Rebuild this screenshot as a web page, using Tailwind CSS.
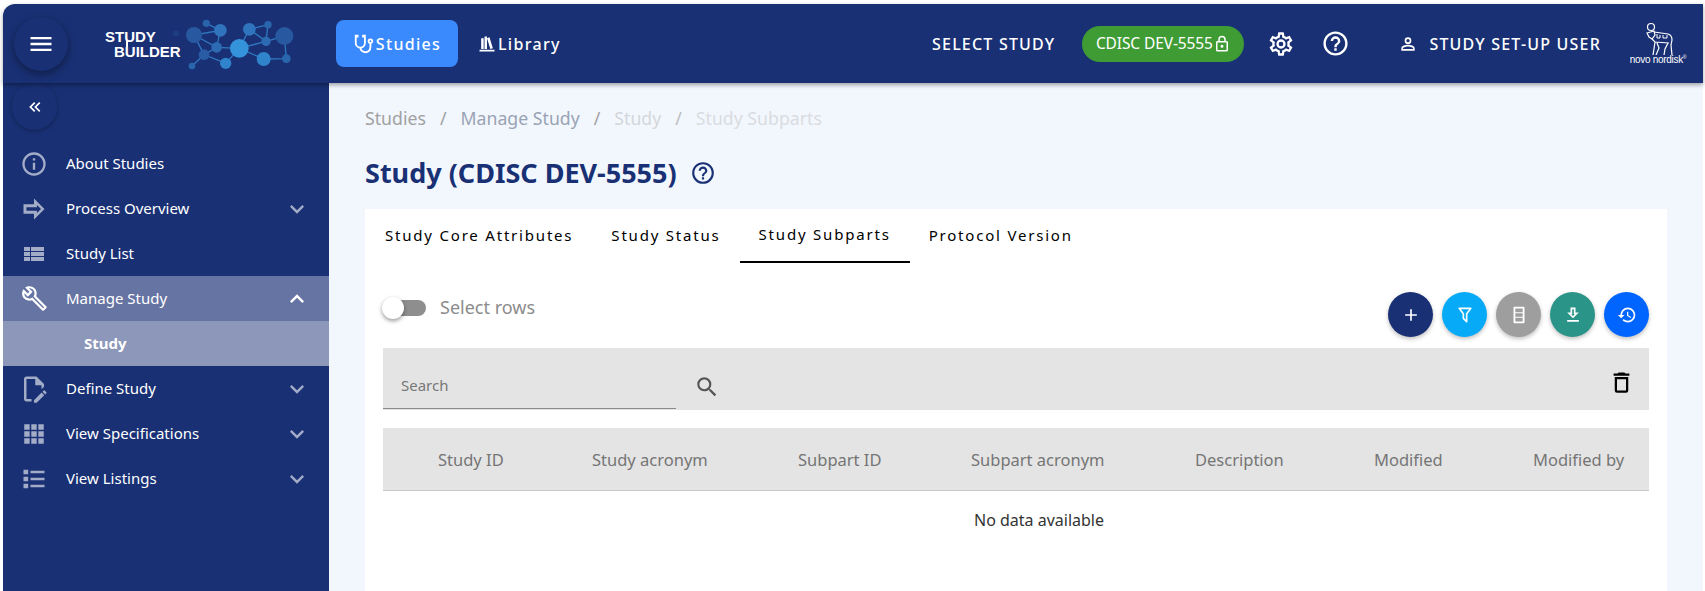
<!DOCTYPE html>
<html lang="en">
<head>
  <meta charset="UTF-8">
  <title>Study Subparts</title>
  <script src="https://cdn.jsdelivr.net/npm/@tailwindcss/browser@4"></script>
</head>
<body class="bg-white font-['Noto_Sans',sans-serif] overflow-hidden">
  <div class="h-[591px] pt-[4px] pl-[3px] pr-[2px] flex flex-col overflow-hidden">

    <!-- Top bar -->
    <header class="relative z-10 h-[79px] shrink-0 flex items-center bg-[#193074] rounded-tl-xl text-white shadow-[0_2px_4px_rgba(0,0,0,0.35)]">
      <button class="ml-[11px] w-[54px] h-[54px] rounded-full bg-[#193074] shadow-[0_3px_8px_rgba(0,0,0,0.4)] flex items-center justify-center">
        <svg class="w-7 h-7 fill-white" viewBox="0 0 24 24"><path d="M3,6H21V8H3V6M3,11H21V13H3V11M3,16H21V18H3V16Z"/></svg>
      </button>

      <!-- Logo -->
      <div class="relative ml-[22px] w-[220px] h-[75px] shrink-0">
        <svg class="absolute inset-0 w-[220px] h-[75px]" viewBox="0 0 660 225">
          <g stroke="#2f78c0" stroke-width="4" fill="none">
            <path d="M312 87L391 73L349 52M312 87L380 124L391 73M380 124L342 146L306 180M342 146L407 172L448 127L380 124M312 87L342 146M448 127L478 70L534 56L528 106L478 70M448 127L528 106L583 90L589 158L521 159L448 127"/>
          </g>
          <circle cx="258" cy="82" r="10" fill="#1c3b80"/>
          <circle cx="312" cy="87" r="24" fill="#28589f"/>
          <circle cx="391" cy="73" r="19" fill="#2f74bc"/>
          <circle cx="349" cy="52" r="11" fill="#2a63aa"/>
          <circle cx="380" cy="124" r="16" fill="#2c6ab2"/>
          <circle cx="342" cy="146" r="16" fill="#2a5ca6"/>
          <circle cx="448" cy="127" r="28" fill="#3593dc"/>
          <circle cx="407" cy="172" r="17" fill="#2f84cc"/>
          <circle cx="306" cy="180" r="10" fill="#2a66ae"/>
          <circle cx="478" cy="70" r="19" fill="#2f74bc"/>
          <circle cx="534" cy="56" r="11" fill="#2a66ae"/>
          <circle cx="528" cy="106" r="14" fill="#2c6ab2"/>
          <circle cx="583" cy="90" r="27" fill="#28589f"/>
          <circle cx="521" cy="159" r="21" fill="#2f84cc"/>
          <circle cx="589" cy="158" r="13" fill="#2a66ae"/>
        </svg>
        <div class="absolute left-[15px] top-[23px] font-['Liberation_Sans'] font-bold text-[15px] leading-[15px]">STUDY</div>
        <div class="absolute left-[24px] top-[38px] font-['Liberation_Sans'] font-bold text-[15px] leading-[15px]">BUILDER</div>
        <div class="absolute left-[36px] top-[34px] w-[2px] h-[7px] bg-white"></div>
      </div>

      <!-- Main tabs -->
      <nav class="ml-[26px] flex items-center text-[16px] font-medium tracking-[1.3px]">
        <a class="w-[122px] h-[47px] rounded-lg bg-[#3b8afd] flex items-center justify-center gap-[1px]">
          <svg class="w-[22px] h-[22px] fill-white" viewBox="0 0 24 24"><path d="M19,8C19.56,8 20,8.43 20,9A1,1 0 0,1 19,10C18.43,10 18,9.55 18,9C18,8.43 18.43,8 19,8M2,2V11C2,13.96 4.19,16.5 7.14,16.91C7.76,19.92 10.42,22 13.5,22A6.5,6.5 0 0,0 20,15.5V11.81C21.16,11.39 22,10.29 22,9A3,3 0 0,0 19,6A3,3 0 0,0 16,9C16,10.29 16.84,11.4 18,11.81V15.41C18,17.91 16,19.91 13.5,19.91C11.5,19.91 9.82,18.7 9.22,16.9C12,16.3 14,13.8 14,11V2H10V5H12V11A4,4 0 0,1 8,15A4,4 0 0,1 4,11V5H6V2H2Z"/></svg>
          Studies
        </a>
        <a class="ml-[19px] flex items-center gap-[1px]">
          <svg class="w-[20px] h-[20px] fill-white" viewBox="0 0 24 24"><path d="M9 3V18H12V3H9M12 5L16 18L19 17L15 4L12 5M5 5V18H8V5H5M3 19V21H21V19H3Z"/></svg>
          Library
        </a>
      </nav>

      <!-- Right side -->
      <div class="ml-auto flex items-center">
        <span class="text-[16px] font-medium tracking-[1.2px]">SELECT STUDY</span>
        <span class="ml-[27px] w-[162px] h-[36px] rounded-full bg-[#3f9c35] flex items-center justify-center text-[15.5px] tracking-[-0.1px]">
          CDISC DEV-5555
          <svg class="w-[18px] h-[18px] fill-white" viewBox="0 0 24 24"><path d="M12,17C10.89,17 10,16.1 10,15C10,13.89 10.89,13 12,13A2,2 0 0,1 14,15A2,2 0 0,1 12,17M18,20V10H6V20H18M18,8A2,2 0 0,1 20,10V20A2,2 0 0,1 18,22H6C4.89,22 4,21.1 4,20V10C4,8.89 4.89,8 6,8H7V6A5,5 0 0,1 12,1A5,5 0 0,1 17,6V8H18M12,3A3,3 0 0,0 9,6V8H15V6A3,3 0 0,0 12,3Z"/></svg>
        </span>
        <svg class="ml-[23px] w-[28px] h-[28px] fill-white" viewBox="0 0 24 24"><path d="M12,8A4,4 0 0,1 16,12A4,4 0 0,1 12,16A4,4 0 0,1 8,12A4,4 0 0,1 12,8M12,10A2,2 0 0,0 10,12A2,2 0 0,0 12,14A2,2 0 0,0 14,12A2,2 0 0,0 12,10M10,22C9.75,22 9.54,21.82 9.5,21.58L9.13,18.93C8.5,18.68 7.96,18.34 7.44,17.94L4.95,18.95C4.73,19.03 4.46,18.95 4.34,18.73L2.34,15.27C2.21,15.05 2.27,14.78 2.46,14.63L4.57,12.97L4.5,12L4.57,11L2.46,9.37C2.27,9.22 2.21,8.95 2.34,8.73L4.34,5.27C4.46,5.05 4.73,4.96 4.95,5.05L7.44,6.05C7.96,5.66 8.5,5.32 9.13,5.07L9.5,2.42C9.54,2.18 9.75,2 10,2H14C14.25,2 14.46,2.18 14.5,2.42L14.87,5.07C15.5,5.32 16.04,5.66 16.56,6.05L19.05,5.05C19.27,4.96 19.54,5.05 19.66,5.27L21.66,8.73C21.79,8.95 21.73,9.22 21.54,9.37L19.43,11L19.5,12L19.43,13L21.54,14.63C21.73,14.78 21.79,15.05 21.66,15.27L19.66,18.73C19.54,18.95 19.27,19.04 19.05,18.95L16.56,17.95C16.04,18.34 15.5,18.68 14.87,18.93L14.5,21.58C14.46,21.82 14.25,22 14,22H10M11.25,4L10.88,6.61C9.68,6.86 8.62,7.5 7.85,8.39L5.44,7.35L4.69,8.65L6.8,10.2C6.4,11.37 6.4,12.64 6.8,13.8L4.68,15.36L5.43,16.66L7.86,15.62C8.63,16.5 9.68,17.14 10.87,17.38L11.24,20H12.76L13.13,17.39C14.32,17.14 15.37,16.5 16.14,15.62L18.57,16.66L19.32,15.36L17.2,13.81C17.6,12.64 17.6,11.37 17.2,10.2L19.31,8.65L18.56,7.35L16.15,8.39C15.38,7.5 14.32,6.86 13.12,6.62L12.75,4H11.25Z"/></svg>
        <svg class="ml-[26px] w-[29px] h-[29px] fill-white" viewBox="0 0 24 24"><path d="M11,18H13V16H11V18M12,2A10,10 0 0,0 2,12A10,10 0 0,0 12,22A10,10 0 0,0 22,12A10,10 0 0,0 12,2M12,20C7.59,20 4,16.41 4,12C4,7.59 7.59,4 12,4C16.41,4 20,7.59 20,12C20,16.41 16.41,20 12,20M12,6A4,4 0 0,0 8,10H10A2,2 0 0,1 12,8A2,2 0 0,1 14,10C14,12 11,11.75 11,15H13C13,12.75 16,12.5 16,10A4,4 0 0,0 12,6Z"/></svg>
        <svg class="ml-[48px] w-[20px] h-[20px] fill-white" viewBox="0 0 24 24"><path d="M12,4A4,4 0 0,1 16,8A4,4 0 0,1 12,12A4,4 0 0,1 8,8A4,4 0 0,1 12,4M12,6A2,2 0 0,0 10,8A2,2 0 0,0 12,10A2,2 0 0,0 14,8A2,2 0 0,0 12,6M12,13C14.67,13 20,14.33 20,17V20H4V17C4,14.33 9.33,13 12,13M12,14.9C9.03,14.9 5.9,16.36 5.9,17V18.1H18.1V17C18.1,16.36 14.97,14.9 12,14.9Z"/></svg>
        <span class="ml-[11px] text-[16px] font-medium tracking-[1.2px]">STUDY SET-UP USER</span>
        <div class="ml-[28px] mr-[16px] -mt-[1px] w-[58px] flex flex-col items-center">
          <svg class="w-[30px] h-[33px] stroke-white fill-none" viewBox="0 0 30 33" stroke-width="1.2">
            <circle cx="8" cy="5" r="3.5"/>
            <path d="M4 11l7-2 1 4-3 4-3-2z"/>
            <path d="M11 10l14 2q4 1 4 6l-1 5 1 10M9 17l3 3 14 1M12 20l-2 13M14 21l2 5-3 7M25 21l-3 6-1 6"/>
            <path d="M14 12v4h3v-3M20 13v3h4v-3" stroke-width="1"/>
          </svg>
          <span class="font-['Liberation_Sans'] text-[10px] leading-[10px] tracking-[-0.3px] whitespace-nowrap">novo nordisk<span class="align-top text-[5px] leading-[5px]">®</span></span>
        </div>
      </div>
    </header>

    <div class="flex-1 flex min-h-0">
      <!-- Sidebar -->
      <aside class="w-[326px] shrink-0 bg-[#193074] text-white text-[15px]">
        <div class="h-[58px] pl-[9px]">
          <button class="w-[45px] h-[47px] rounded-full bg-[#193074] shadow-[0_1px_4px_rgba(0,0,0,0.3)] flex items-center justify-center">
            <svg class="w-[20px] h-[20px] fill-white" viewBox="0 0 24 24"><path d="M18.41,7.41L17,6L11,12L17,18L18.41,16.59L13.83,12L18.41,7.41M12.41,7.41L11,6L5,12L11,18L12.41,16.59L7.83,12L12.41,7.41Z"/></svg>
          </button>
        </div>
        <a class="h-[45px] flex items-center pl-[17px]">
          <svg class="w-[28px] h-[28px] fill-white/60" viewBox="0 0 24 24"><path d="M11,9H13V7H11M12,20C7.59,20 4,16.41 4,12C4,7.59 7.59,4 12,4C16.41,4 20,7.59 20,12C20,16.41 16.41,20 12,20M12,2A10,10 0 0,0 2,12A10,10 0 0,0 12,22A10,10 0 0,0 22,12A10,10 0 0,0 12,2M11,17H13V11H11V17Z"/></svg>
          <span class="ml-[18px]">About Studies</span>
        </a>
        <a class="h-[45px] flex items-center pl-[17px]">
          <svg class="w-[28px] h-[28px] fill-white/60" viewBox="0 0 24 24"><path fill-rule="evenodd" d="M3 8H12V3l9 9-9 9v-5H3z M5.500 10.500v3H14.500v2L18 12l-3.500-3.500v2z"/></svg>
          <span class="ml-[18px]">Process Overview</span>
          <svg class="ml-auto mr-[18px] w-[28px] h-[28px] fill-white/60" viewBox="0 0 24 24"><path d="M7.41,8.58L12,13.17L16.59,8.58L18,10L12,16L6,10L7.41,8.58Z"/></svg>
        </a>
        <a class="h-[45px] flex items-center pl-[19px]">
          <svg class="w-[24px] h-[24px] fill-white/60" viewBox="0 0 24 24"><path d="M9,5V9H22V5M9,19H22V15H9M9,14H22V10H9M2,9H8V5H2M2,19H8V15H2M2,14H8V10H2V14Z"/></svg>
          <span class="ml-[20px]">Study List</span>
        </a>
        <a class="h-[45px] flex items-center pl-[18px] bg-[#6674a3]">
          <svg class="w-[27px] h-[27px] fill-white" viewBox="0 0 24 24"><path d="M22.61,19L13.53,9.91C14.45,7.57 13.97,4.81 12.09,2.91C9.79,0.61 6.21,0.4 3.66,2.26L7.5,6.11L6.08,7.5L2.25,3.69C0.39,6.23 0.6,9.82 2.9,12.11C4.76,13.97 7.47,14.46 9.79,13.59L18.9,22.69C19.29,23.08 19.92,23.08 20.31,22.69L22.61,20.39C23,20 23,19.35 22.61,19M19.61,20.59L10.15,11.13C9.54,11.58 8.86,11.85 8.15,11.95C6.79,12.15 5.36,11.74 4.32,10.7C3.37,9.76 2.93,8.5 3,7.26L6.09,10.35L10.33,6.11L7.24,3C8.5,2.95 9.73,3.39 10.68,4.33C11.76,5.41 12.17,6.9 11.92,8.29C11.8,9 11.5,9.66 11.04,10.25L20.5,19.7L19.61,20.59Z"/></svg>
          <span class="ml-[18px]">Manage Study</span>
          <svg class="ml-auto mr-[18px] w-[28px] h-[28px] fill-white" viewBox="0 0 24 24"><path d="M7.41,15.41L12,10.83L16.59,15.41L18,14L12,8L6,14L7.41,15.41Z"/></svg>
        </a>
        <a class="h-[45px] flex items-center pl-[81px] bg-[#8d97b9] font-bold">Study</a>
        <a class="h-[45px] flex items-center pl-[16px]">
          <svg class="w-[30px] h-[30px] fill-white/60" viewBox="0 0 24 24"><path d="M10 20H6V4H13V9H18V12.100L20 10.100V8L14 2H6C4.900 2 4 2.900 4 4V20C4 21.100 4.900 22 6 22H10V20M20.200 13C20.300 13 20.500 13.100 20.600 13.200L21.900 14.500C22.100 14.700 22.100 15.100 21.900 15.300L20.900 16.300L18.800 14.200L19.800 13.200C19.900 13.100 20 13 20.200 13M20.200 16.900L14.100 23H12V20.900L18.100 14.800L20.200 16.900Z"/></svg>
          <span class="ml-[17px]">Define Study</span>
          <svg class="ml-auto mr-[18px] w-[28px] h-[28px] fill-white/60" viewBox="0 0 24 24"><path d="M7.41,8.58L12,13.17L16.59,8.58L18,10L12,16L6,10L7.41,8.58Z"/></svg>
        </a>
        <a class="h-[45px] flex items-center pl-[18px]">
          <svg class="w-[26px] h-[26px] fill-white/60" viewBox="0 0 24 24"><path d="M3 3h5v5H3zM9.500 3h5v5h-5zM16 3h5v5h-5zM3 9.500h5v5H3zM9.500 9.500h5v5h-5zM16 9.500h5v5h-5zM3 16h5v5H3zM9.500 16h5v5h-5zM16 16h5v5h-5z"/></svg>
          <span class="ml-[19px]">View Specifications</span>
          <svg class="ml-auto mr-[18px] w-[28px] h-[28px] fill-white/60" viewBox="0 0 24 24"><path d="M7.41,8.58L12,13.17L16.59,8.58L18,10L12,16L6,10L7.41,8.58Z"/></svg>
        </a>
        <a class="h-[45px] flex items-center pl-[17px]">
          <svg class="w-[28px] h-[28px] fill-white/60" viewBox="0 0 24 24"><path d="M3,4H7V8H3V4M9,5V7H21V5H9M3,10H7V14H3V10M9,11V13H21V11H9M3,16H7V20H3V16M9,17V19H21V17H9Z"/></svg>
          <span class="ml-[18px]">View Listings</span>
          <svg class="ml-auto mr-[18px] w-[28px] h-[28px] fill-white/60" viewBox="0 0 24 24"><path d="M7.41,8.58L12,13.17L16.59,8.58L18,10L12,16L6,10L7.41,8.58Z"/></svg>
        </a>
      </aside>

      <!-- Main content -->
      <main class="flex-1 min-w-0 bg-[#f2f7fe] px-[36px] flex flex-col">
        <nav class="h-[24px] mt-[23px] flex items-center text-[17.7px] text-[#a1a1a1]">
          <span>Studies</span>
          <span class="mx-[14px]">/</span>
          <span class="text-[#9aa3b4]">Manage Study</span>
          <span class="mx-[14px]">/</span>
          <span class="text-[#d4d6da]">Study</span>
          <span class="mx-[14px] text-[#bdbdbd]">/</span>
          <span class="text-[#dadcdf]">Study Subparts</span>
        </nav>
        <div class="mt-[22px] h-[42px] flex items-center">
          <h1 class="text-[27px] font-bold text-[#193074]">Study (CDISC DEV-5555)</h1>
          <svg class="ml-[13px] w-[26px] h-[26px] fill-[#193074]" viewBox="0 0 24 24"><path d="M11,18H13V16H11V18M12,2A10,10 0 0,0 2,12A10,10 0 0,0 12,22A10,10 0 0,0 22,12A10,10 0 0,0 12,2M12,20C7.59,20 4,16.41 4,12C4,7.59 7.59,4 12,4C16.41,4 20,7.59 20,12C20,16.41 16.41,20 12,20M12,6A4,4 0 0,0 8,10H10A2,2 0 0,1 12,8A2,2 0 0,1 14,10C14,12 11,11.75 11,15H13C13,12.75 16,12.5 16,10A4,4 0 0,0 12,6Z"/></svg>
        </div>

        <section class="mt-[15px] flex-1 bg-white px-[18px]">
          <div class="h-[54px] flex text-[15px] text-black tracking-[1.8px] -ml-[17px]">
            <a class="px-[19px] pb-[2px] flex items-center">Study Core Attributes</a>
            <a class="px-[19px] pb-[2px] flex items-center">Study Status</a>
            <a class="px-[19px] pb-[2px] flex items-center border-b-2 border-black">Study Subparts</a>
            <a class="px-[19px] pb-[2px] flex items-center">Protocol Version</a>
          </div>

          <div class="mt-[29px] flex justify-between items-start">
            <div class="mt-[2px] flex items-center">
              <div class="relative w-[43px] h-[16px] rounded-full bg-[#8e8e8e]">
                <span class="absolute -left-[1px] -top-[3px] w-[22px] h-[22px] rounded-full bg-white shadow-[0_2px_4px_rgba(0,0,0,0.4)]"></span>
              </div>
              <span class="ml-[14px] text-[18px] text-[#8c8c8c]">Select rows</span>
            </div>
            <div class="flex gap-[9px]">
              <button class="w-[45px] h-[45px] rounded-full bg-[#193074] shadow-[0_2px_4px_rgba(0,0,0,0.25)] flex items-center justify-center">
                <svg class="w-[20px] h-[20px] fill-white" viewBox="0 0 24 24"><path d="M19,13H13V19H11V13H5V11H11V5H13V11H19V13Z"/></svg>
              </button>
              <button class="w-[45px] h-[45px] rounded-full bg-[#06aaf6] shadow-[0_2px_4px_rgba(0,0,0,0.25)] flex items-center justify-center">
                <svg class="w-[20px] h-[20px] fill-white" viewBox="0 0 24 24"><path d="M15,19.88C15.04,20.18 14.94,20.5 14.71,20.71C14.32,21.1 13.69,21.1 13.3,20.71L9.29,16.7C9.06,16.47 8.96,16.16 9,15.87V10.75L4.21,4.62C3.87,4.19 3.95,3.56 4.38,3.22C4.57,3.08 4.78,3 5,3H19C19.22,3 19.43,3.08 19.62,3.22C20.05,3.56 20.13,4.19 19.79,4.62L15,10.75V19.88M7.04,5L11,10.06V15.58L13,17.58V10.05L16.96,5H7.04Z"/></svg>
              </button>
              <button class="w-[45px] h-[45px] rounded-full bg-[#9e9e9e] shadow-[0_2px_4px_rgba(0,0,0,0.25)] flex items-center justify-center">
                <svg class="w-[22px] h-[22px] fill-white" viewBox="0 0 24 24"><path fill-rule="evenodd" d="M7 3h10a1 1 0 0 1 1 1v16a1 1 0 0 1-1 1H7a1 1 0 0 1-1-1V4a1 1 0 0 1 1-1z M8 5v4h8V5z M8 10v4h8v-4z M8 15v4h8v-4z"/></svg>
              </button>
              <button class="w-[45px] h-[45px] rounded-full bg-[#2a9488] shadow-[0_2px_4px_rgba(0,0,0,0.25)] flex items-center justify-center">
                <svg class="w-[20px] h-[20px] fill-white" viewBox="0 0 24 24"><path d="M13,5V11H14.17L12,13.17L9.83,11H11V5H13M15,3H9V9H5L12,16L19,9H15V3M19,18H5V20H19V18Z"/></svg>
              </button>
              <button class="w-[45px] h-[45px] rounded-full bg-[#0065ff] shadow-[0_2px_4px_rgba(0,0,0,0.25)] flex items-center justify-center">
                <svg class="w-[20px] h-[20px] fill-white" viewBox="0 0 24 24"><path d="M13.5,8H12V13L16.28,15.54L17,14.33L13.5,12.25V8M13,3A9,9 0 0,0 4,12H1L4.96,16.03L9,12H6A7,7 0 0,1 13,5A7,7 0 0,1 20,12A7,7 0 0,1 13,19C11.07,19 9.32,18.21 8.06,16.94L6.64,18.36C8.27,20 10.5,21 13,21A9,9 0 0,0 22,12A9,9 0 0,0 13,3Z"/></svg>
              </button>
            </div>
          </div>

          <!-- Search toolbar -->
          <div class="mt-[11px] h-[62px] bg-[#e4e4e4] flex items-end">
            <div class="w-[293px] h-[47px] mb-px border-b border-[#8a8a8a] flex items-center pl-[18px] text-[15px] text-[#777]">Search</div>
            <svg class="ml-[18px] mb-[10px] w-[26px] h-[26px] fill-[#555]" viewBox="0 0 24 24"><path d="M9.5,3A6.5,6.5 0 0,1 16,9.5C16,11.11 15.41,12.59 14.44,13.73L14.71,14H15.5L20.5,19L19,20.5L14,15.5V14.71L13.73,14.44C12.59,15.41 11.11,16 9.5,16A6.5,6.5 0 0,1 3,9.5A6.5,6.5 0 0,1 9.5,3M9.5,5C7,5 5,7 5,9.5C5,12 7,14 9.5,14C12,14 14,12 14,9.5C14,7 12,5 9.5,5Z"/></svg>
            <svg class="ml-auto mr-[14px] mb-[14px] w-[27px] h-[27px] fill-black" viewBox="0 0 24 24"><path d="M6,19A2,2 0 0,0 8,21H16A2,2 0 0,0 18,19V7H6V19M8,9H16V19H8V9M15.5,4L14.5,3H9.5L8.5,4H5V6H19V4H15.5Z"/></svg>
          </div>

          <!-- Table -->
          <table class="mt-[18px] w-full table-fixed text-[16.5px]">
            <thead class="bg-[#e4e4e4] text-[#757575]">
              <tr class="h-[62px] border-b border-[#c8c8c8] text-left">
                <th class="w-[55px] font-normal"></th>
                <th class="w-[154px] pt-[3px] font-normal">Study ID</th>
                <th class="w-[206px] pt-[3px] font-normal">Study acronym</th>
                <th class="w-[173px] pt-[3px] font-normal">Subpart ID</th>
                <th class="w-[224px] pt-[3px] font-normal">Subpart acronym</th>
                <th class="w-[179px] pt-[3px] font-normal">Description</th>
                <th class="w-[159px] pt-[3px] font-normal">Modified</th>
                <th class="pt-[3px] font-normal">Modified by</th>
              </tr>
            </thead>
            <tbody>
              <tr class="h-[60px]">
                <td colspan="8" class="pl-[46px] text-center text-[16px] text-[#333]">No data available</td>
              </tr>
            </tbody>
          </table>
        </section>
      </main>
    </div>
  </div>
</body>
</html>
